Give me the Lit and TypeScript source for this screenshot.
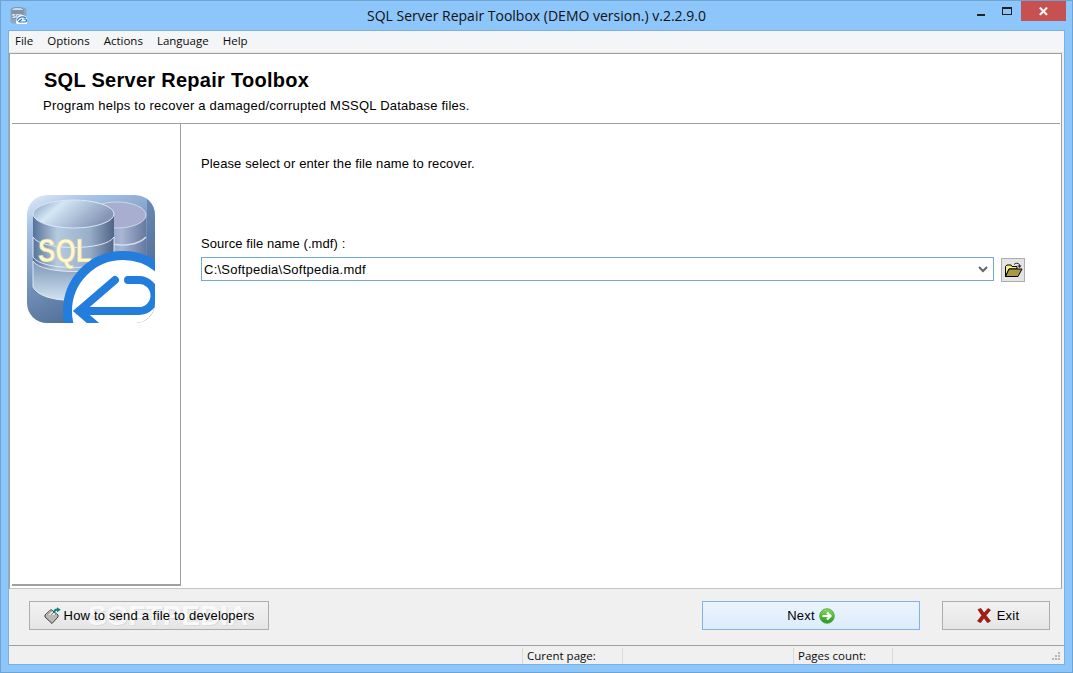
import { LitElement, html, css, svg } from "lit";
import { customElement } from "lit/decorators.js";

const bigIcon = svg`<svg class="big" width="128" height="128" viewBox="0 0 128 128">
<defs>
<linearGradient id="bg" x1="0" y1="0" x2="0.5" y2="1"><stop offset="0" stop-color="#e3edf8"/><stop offset="0.2" stop-color="#a9c5e8"/><stop offset="0.6" stop-color="#7390b8"/><stop offset="1" stop-color="#4a6890"/></linearGradient>
<linearGradient id="cyl" x1="0" y1="0" x2="1" y2="0"><stop offset="0" stop-color="#56729a"/><stop offset="0.3" stop-color="#b5cbe0"/><stop offset="0.7" stop-color="#98adc8"/><stop offset="1" stop-color="#4f6488"/></linearGradient>
<linearGradient id="cyl2" x1="0" y1="0" x2="1" y2="0"><stop offset="0" stop-color="#7e93b6"/><stop offset="0.5" stop-color="#a9b6d4"/><stop offset="1" stop-color="#66799f"/></linearGradient>
<linearGradient id="top" x1="0" y1="0" x2="1" y2="0.4"><stop offset="0" stop-color="#7d96b6"/><stop offset="0.35" stop-color="#d3e7f5"/><stop offset="1" stop-color="#8496b8"/></linearGradient>
<linearGradient id="seg" x1="0" y1="0" x2="0" y2="1"><stop offset="0" stop-color="#7d96b5"/><stop offset="1" stop-color="#d0e3f2"/></linearGradient>
<clipPath id="clip"><rect width="128" height="128" rx="20"/></clipPath>
</defs>
<g clip-path="url(#clip)">
<rect width="128" height="128" fill="url(#bg)"/>
<path d="M120 0h8v128h-8z" fill="#4f6f9a" opacity=".55"/>
<path d="M70 20 H119 V84 C119 96 90 100 70 96 Z" fill="url(#cyl2)"/>
<ellipse cx="90" cy="20" rx="29" ry="13" fill="#a7aecf" stroke="#cdd7e9"/>
<path d="M80 48 C95 52 112 50 119 42 M80 70 C95 74 112 72 119 64" fill="none" stroke="#d3deee" stroke-width="1.500"/>
<path d="M6 20 V92 C6 110 87 110 87 92 V20 Z" fill="url(#cyl)"/>
<ellipse cx="46.500" cy="19" rx="40.500" ry="14" fill="url(#top)" stroke="#dbe6f2" stroke-width="1"/>
<path d="M6 42 C14 56 79 56 87 42 V62 C79 76 14 76 6 62 Z" fill="url(#cyl)" stroke="#dfe8f3" stroke-width="1"/>
<path d="M6 66 C14 80 79 80 87 66 V92 C79 110 14 110 6 92 Z" fill="url(#seg)" stroke="#dfe8f3" stroke-width="1"/>
<text transform="translate(11 67) scale(.77 1)" class="sql">SQL</text>
<circle cx="96" cy="116" r="55.500" fill="#fff" stroke="#237ddc" stroke-width="9"/>
<path d="M88 85 L52 116 L73 134 M52 116 H112 a15.500 15.500 0 0 0 0 -31 H101" fill="none" stroke="#237ddc" stroke-width="8" stroke-linecap="round" stroke-linejoin="miter"/>
</g></svg>`;

const smallIcon = svg`<svg width="17" height="17" viewBox="0 0 17 17">
<rect x=".5" y=".5" width="16" height="16" rx="3" fill="#8fa5c2"/>
<ellipse cx="7.500" cy="3" rx="6" ry="2.500" fill="#cfdbe8" stroke="#5e7695" stroke-width=".6"/>
<rect x="1.500" y="3" width="12" height="9" fill="#7d93b0"/>
<text x="2" y="10.500" class="sqls">SQL</text>
<circle cx="12" cy="14" r="6" fill="#fff"/>
<path d="M7 13.500 A6 6 0 0 1 16 11" fill="none" stroke="#2a78c8" stroke-width="1.300"/>
<path d="M8.500 15 L12 12 M8.500 15 H15 a1.500 1.500 0 0 0 0 -3 H13.500" fill="none" stroke="#2a78c8" stroke-width="1.200"/>
</svg>`;

const folderIcon = svg`<svg width="19" height="16" viewBox="0 0 19 16">
<path d="M1.500 4.500 L3 3 H7 L8 4.500 H13 V7 H5 L1.500 14.500 Z" fill="#f4f08a" stroke="#000" stroke-width="1"/>
<path d="M1.500 14.500 L5 7 H18 L14 14.500 Z" fill="#a89a42" stroke="#000" stroke-width="1"/>
<path d="M10 2.500 C11.500 .8 14 .8 15.500 2.500 L15.500 5" fill="none" stroke="#222" stroke-width="1"/>
<path d="M13.500 3.500 H17.500 L15.500 6 Z" fill="#222"/>
</svg>`;

const sendIcon = svg`<svg width="17" height="17" viewBox="0 0 17 17">
<path d="M1 8 L7 2.500 L14 8 L8 15 Z" fill="#dfe0dc" stroke="#3f3f3f" stroke-width="1"/>
<path d="M3 8 L8 3.500 M5 10 L10 5 M7 12 L12 7" stroke="#8a8a8a" stroke-width="1"/>
<path d="M1 8 V10 L8 16.500 L14 10 V8" fill="#b9b9b5" stroke="#3f3f3f" stroke-width="1"/>
<path d="M10 6 C10 3.500 11.500 2.500 13.500 2.500" fill="none" stroke="#0f8086" stroke-width="2"/>
<path d="M13 .2 L16.800 2.800 L13 5.200 Z" fill="#0f8086"/>
</svg>`;

const nextIcon = svg`<svg width="16" height="16" viewBox="0 0 16 16">
<defs><linearGradient id="gr" x1="0" y1="0" x2="0" y2="1"><stop offset="0" stop-color="#8fd95a"/><stop offset="1" stop-color="#1f9a22"/></linearGradient></defs>
<circle cx="8" cy="8" r="7.300" fill="url(#gr)" stroke="#4a9d3a" stroke-width=".8"/>
<path d="M3.500 8 H11 M8 4.500 L11.500 8 L8 11.500" fill="none" stroke="#fff" stroke-width="2.200"/>
</svg>`;

const exitIcon = svg`<svg width="14" height="15" viewBox="0 0 14 15">
<path d="M1 1.500 L4 .5 L7 5 L11 .5 L13.500 2 L9 7.500 L13.500 13 L10.500 14.800 L7 10 L3.500 14.800 L.5 13 L4.800 7.500 Z" fill="#a81a12" stroke="#6d0b08" stroke-width=".6"/>
</svg>`;

@customElement("app-root")
export class AppRoot extends LitElement {
  static styles = css`
    :host {
      display: block; width: 1073px; height: 673px; box-sizing: border-box;
      background: #8cc6fa; border: 1px solid #6ea3d2;
      font-family: "Liberation Sans", Arial, sans-serif; font-size: 13px; color: #000;
      letter-spacing: .2px; overflow: hidden;
    }
    .titlebar { height: 29px; display: flex; align-items: flex-start; position: relative; }
    .appicon { margin: 6px 0 0 9px; width: 17px; height: 17px; }
    .appicon svg { display: block; }
    .title {
      position: absolute; left: 0; right: 0; top: 5px; text-align: center; letter-spacing: 0;
      font-family: "Open Sans", "Noto Sans", sans-serif; font-size: 14px; line-height: 20px; color: #101010;
    }
    .controls { margin-left: auto; display: flex; margin-right: 6px; }
    .ctl { width: 26px; height: 20px; display: flex; align-items: center; justify-content: center; }
    .min { width: 8px; height: 2px; background: #222; margin-top: 7px; }
    .max { width: 8px; height: 5px; border: 1px solid #222; border-top-width: 2px; }
    .ctl.wide { width: 45px; background: #c75050; margin-left: 1px; }
    .x { font: bold 13px "Liberation Sans", sans-serif; color: #fff; }
    .client {
      margin: 0 7px; height: 635px; box-sizing: border-box; background: #f0f0f0;
      border: 1px solid #7fb0dc; display: flex; flex-direction: column;
    }
    .menu {
      height: 22px; box-sizing: border-box; padding: 0 0 3px 6px; background: #f4f5f7; display: flex; align-items: center; gap: 14px; letter-spacing: 0;
      font-family: "Open Sans", "Noto Sans", sans-serif; font-size: 11.500px; color: #0a0a0a; border-bottom: 1px solid #e8e8e8;
    }
    .panel {
      height: 536px; box-sizing: border-box; margin-right: 2px; background: #fff;
      border: 1px solid #a0a0a0; border-bottom-color: #c4c4c4;
      display: flex; flex-direction: column; padding: 0 1px 0 2px;
    }
    .header { height: 70px; box-sizing: border-box; padding: 14px 0 0 32px; border-bottom: 1px solid #a0a0a0; }
    .header h1 { margin: 0; font-size: 20px; line-height: 25px; font-weight: bold; letter-spacing: .28px; }
    .header p { margin: 5px 0 0 -1px; line-height: 15px; letter-spacing: .23px; }
    .body { flex: 1; display: flex; min-height: 0; }
    .side {
      width: 169px; height: 462px; box-sizing: border-box; border-right: 1px solid #a0a0a0; border-bottom: 2px solid #a0a0a0;
      padding: 71px 0 0 15px;
    }
    .side svg { display: block; }
    .sql { font: bold 34px "Liberation Sans", sans-serif; fill: #fdf8cf; stroke: #d8c98a; stroke-width: .5; letter-spacing: 0; }
    .sqls { font: bold 5.500px "Liberation Sans", sans-serif; fill: #fff; letter-spacing: 0; }
    .main { flex: 1; padding: 32px 0 0 20px; }
    .main p { margin: 0; line-height: 15px; letter-spacing: .12px; }
    .main .lab { margin-top: 65px; letter-spacing: .08px; }
    .row { display: flex; gap: 7px; margin-top: 6px; align-items: flex-start; }
    .combo {
      width: 793px; height: 24px; box-sizing: border-box; border: 1px solid #6ea8dc; background: #fff;
      display: flex; align-items: center; padding: 0 3px 0 2px; justify-content: space-between; letter-spacing: .25px;
    }
    .chev { width: 14px; height: 14px; display: block; }
    .browse {
      width: 24px; height: 24px; margin-top: 1px; box-sizing: border-box; background: #e4e4e4; border: 1px solid #adadad;
      display: flex; align-items: center; justify-content: center;
    }
    .footer {
      height: 57px; box-sizing: border-box; border-bottom: 1px solid #a0a0a0; display: flex;
      padding: 12px 14px 0 20px; align-items: flex-start;
    }
    .btn {
      height: 29px; box-sizing: border-box; border: 1px solid #adadad; position: relative; overflow: hidden;
      background: linear-gradient(#f2f2f2, #e5e5e5); display: flex; align-items: center; justify-content: center; gap: 3px;
    }
    .btn span { position: relative; }
    .help { width: 240px; letter-spacing: .18px; }
    .wm {
      position: absolute; left: 58px; top: 0; font-size: 28px; font-weight: bold; color: #f9f9f9; letter-spacing: 0; line-height: 27px; white-space: nowrap;
      text-shadow: 1px 1px 0 #dcdcdc;
    }
    .help svg { position: relative; }
    .next { width: 218px; margin-left: auto; background: linear-gradient(#ebf4fd, #dcecfc); border-color: #7eb4ea; gap: 4px; }
    .exit { width: 108px; margin-left: 22px; gap: 6px; padding-left: 4px; }
    .status {
      flex: 1; display: flex; position: relative; font-family: "Open Sans", "Noto Sans", sans-serif; font-size: 11.500px; color: #0a0a0a;
      padding-top: 2px; box-sizing: border-box; letter-spacing: 0;
    }
    .cell { height: 16px; line-height: 16px; padding-left: 4px; border-left: 1px solid #dadada; box-sizing: border-box; }
    .c1 { margin-left: 513px; width: 100px; }
    .c2 { width: 171px; }
    .c3 { width: 100px; border-right: 1px solid #dadada; }
    .grip { position: absolute; right: 3px; bottom: 3px; }
  `;

  render() {
    return html`
      <div class="titlebar">
        <div class="appicon">${smallIcon}</div>
        <div class="title">SQL Server Repair Toolbox (DEMO version.) v.2.2.9.0</div>
        <div class="controls">
          <div class="ctl"><div class="min"></div></div>
          <div class="ctl"><div class="max"></div></div>
          <div class="ctl wide"><span class="x">✕</span></div>
        </div>
      </div>
      <div class="client">
        <div class="menu"><span>File</span><span>Options</span><span>Actions</span><span>Language</span><span>Help</span></div>
        <div class="panel">
          <div class="header">
            <h1>SQL Server Repair Toolbox</h1>
            <p>Program helps to recover a damaged/corrupted MSSQL Database files.</p>
          </div>
          <div class="body">
            <div class="side">${bigIcon}</div>
            <div class="main">
              <p>Please select or enter the file name to recover.</p>
              <p class="lab">Source file name (.mdf) :</p>
              <div class="row">
                <div class="combo"><span>C:\\Softpedia\\Softpedia.mdf</span>
                  <svg class="chev" viewBox="0 0 14 14"><path d="M3 5 L7 9 L11 5" fill="none" stroke="#666" stroke-width="2"/></svg>
                </div>
                <div class="browse">${folderIcon}</div>
              </div>
            </div>
          </div>
        </div>
        <div class="footer">
          <div class="btn help"><div class="wm">SOFTPEDIA</div>${sendIcon}<span>How to send a file to developers</span></div>
          <div class="btn next"><span>Next</span>${nextIcon}</div>
          <div class="btn exit">${exitIcon}<span>Exit</span></div>
        </div>
        <div class="status">
          <div class="cell c1">Curent page:</div>
          <div class="cell c2"></div>
          <div class="cell c3">Pages count:</div>
          <svg class="grip" width="10" height="10" viewBox="0 0 10 10" fill="#b5b5b5"><rect x="7" y="1" width="2" height="2"/><rect x="4" y="4" width="2" height="2"/><rect x="7" y="4" width="2" height="2"/><rect x="1" y="7" width="2" height="2"/><rect x="4" y="7" width="2" height="2"/><rect x="7" y="7" width="2" height="2"/></svg>
        </div>
      </div>
    `;
  }
}
